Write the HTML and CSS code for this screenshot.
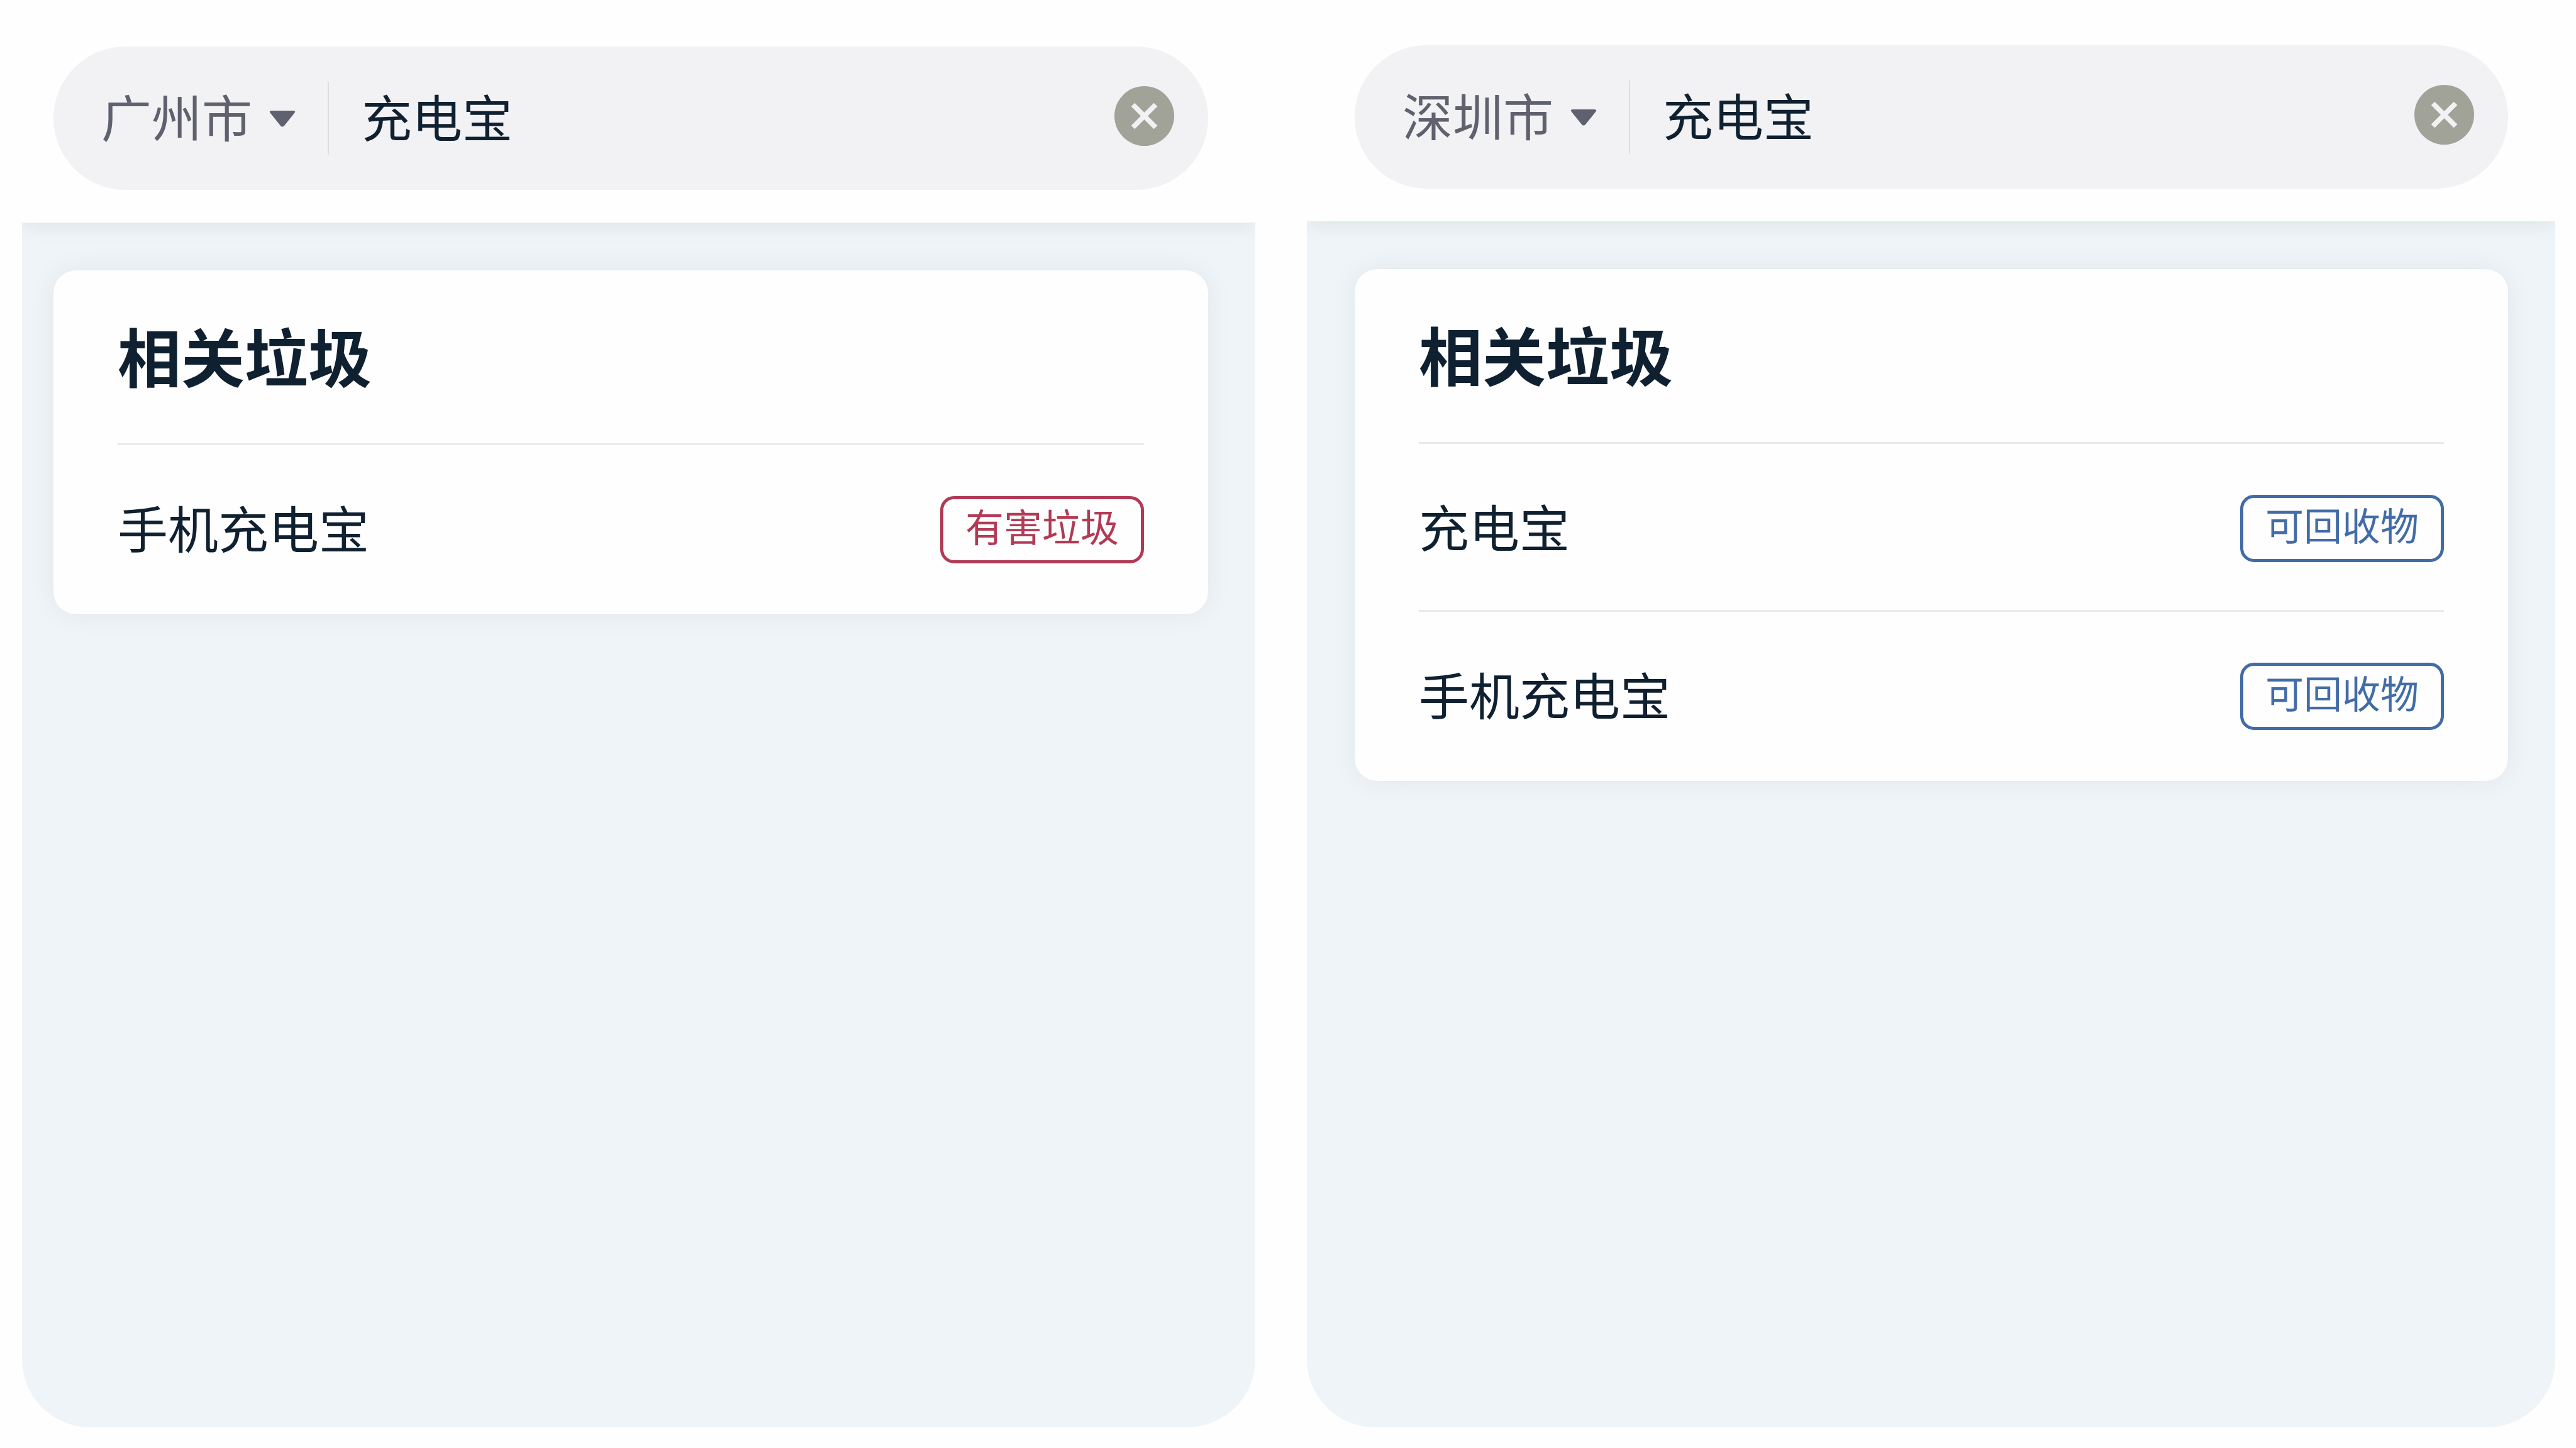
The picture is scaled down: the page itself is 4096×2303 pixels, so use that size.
FILE: index.html
```html
<!DOCTYPE html>
<html lang="zh-CN">
<head>
<meta charset="utf-8">
<meta name="viewport" content="width=device-width, initial-scale=1">
<title>垃圾分类查询</title>
<link rel="stylesheet" href="styles.css">
</head>
<body>
<main class="screens">
  <section class="screen screen--first" aria-label="广州市">
    <header class="topbar">
      <form class="search" role="search">
        <div class="city">
          <select class="city__select" aria-label="城市">
            <option selected>广州市</option>
            <option>深圳市</option>
          </select>
          <svg class="city__arrow" viewBox="0 0 42 28" aria-hidden="true"><path d="M4 1H38Q43 1 40 5L24 25Q21 28 18 25L2 5Q-1 1 4 1Z"/></svg>
        </div>
        <input class="search__input" type="text" value="充电宝" aria-label="搜索垃圾">
        <button class="clear" type="reset" aria-label="清除">
          <svg class="clear__icon" viewBox="0 0 95 95" aria-hidden="true"><circle cx="47.500" cy="47.500" r="47.500"/><path d="M29.500 29.500L65.500 65.500M65.500 29.500L29.500 65.500"/></svg>
        </button>
      </form>
    </header>
    <div class="content">
      <article class="card">
        <h2 class="card__title">相关垃圾</h2>
        <ul class="list">
          <li class="item"><span class="item__name">手机充电宝</span><span class="badge badge--harmful">有害垃圾</span></li>
        </ul>
      </article>
    </div>
  </section>

  <section class="screen screen--second" aria-label="深圳市">
    <header class="topbar">
      <form class="search" role="search">
        <div class="city">
          <select class="city__select" aria-label="城市">
            <option>广州市</option>
            <option selected>深圳市</option>
          </select>
          <svg class="city__arrow" viewBox="0 0 42 28" aria-hidden="true"><path d="M4 1H38Q43 1 40 5L24 25Q21 28 18 25L2 5Q-1 1 4 1Z"/></svg>
        </div>
        <input class="search__input" type="text" value="充电宝" aria-label="搜索垃圾">
        <button class="clear" type="reset" aria-label="清除">
          <svg class="clear__icon" viewBox="0 0 95 95" aria-hidden="true"><circle cx="47.500" cy="47.500" r="47.500"/><path d="M29.500 29.500L65.500 65.500M65.500 29.500L29.500 65.500"/></svg>
        </button>
      </form>
    </header>
    <div class="content">
      <article class="card">
        <h2 class="card__title">相关垃圾</h2>
        <ul class="list">
          <li class="item"><span class="item__name">充电宝</span><span class="badge badge--recyclable">可回收物</span></li>
          <li class="item"><span class="item__name">手机充电宝</span><span class="badge badge--recyclable">可回收物</span></li>
        </ul>
      </article>
    </div>
  </section>
</main>
</body>
</html>
```

FILE: styles.css
```css
* {
  box-sizing: border-box;
}

body {
  margin: 0;
  background: #fefefe;
  color: #0f2030;
  font-family: "Noto Sans CJK SC", sans-serif;
}

.screens {
  display: grid;
  grid-template-columns: 1961fr 1985fr;
  gap: 82px;
  min-height: 100vh;
  padding: 0 33px 33px 35px;
}

.screen {
  display: flex;
  flex-direction: column;
  overflow: hidden;
  border-radius: 0 0 108px 108px;
  background: #eef4f7;
}

.screen--first {
  --top: 74px;
  --left: 50px;
}

.screen--second {
  --top: 72px;
  --left: 76px;
}

.topbar {
  padding: var(--top) 75px 52px var(--left);
  background: #fefefe;
  box-shadow: 0 6px 30px rgba(20, 25, 10, 0.07);
}

.search {
  display: flex;
  align-items: center;
  height: 228px;
  padding: 0 54px 0 76px;
  border-radius: 114px;
  background: #f2f2f4;
}

.city {
  position: relative;
  display: flex;
  align-items: center;
  height: 117px;
  padding-right: 52px;
  border-right: 2px solid #dcdddf;
}

.city__select {
  width: 308px;
  height: 117px;
  padding: 0 0 10px;
  border: 0;
  appearance: none;
  background: none;
  color: #5f616e;
  font: 400 80px/107px "Noto Sans CJK SC", sans-serif;
}

.city__arrow {
  position: absolute;
  top: 45px;
  left: 267px;
  width: 42px;
  height: 28px;
  fill: #5f616e;
  pointer-events: none;
}

.search__input {
  flex: 1;
  min-width: 0;
  height: 117px;
  padding: 0 0 10px 52px;
  border: 0;
  outline: 0;
  background: none;
  color: #0f2030;
  font: 400 80px/107px "Noto Sans CJK SC", sans-serif;
}

.clear {
  width: 95px;
  height: 95px;
  margin: 0 0 8px;
  padding: 0;
  border: 0;
  background: none;
}

.clear__icon {
  display: block;
  width: 100%;
  height: 100%;
  fill: #a1a398;
  stroke: none;
}

.clear__icon path {
  stroke: #f2f2f4;
  stroke-width: 8;
}

.content {
  padding: 76px 75px 76px var(--left);
}

.card {
  padding: 0 102px 5px;
  border-radius: 36px;
  background: #fefefe;
  box-shadow: 0 0 44px rgba(20, 25, 10, 0.06);
}

.card__title {
  height: 275px;
  margin: 0;
  font-size: 101px;
  font-weight: 700;
  line-height: 269px;
}

.list {
  margin: 0;
  padding: 0;
  list-style: none;
}

.item {
  display: flex;
  align-items: center;
  justify-content: space-between;
  height: 267px;
  padding-top: 4px;
  border-top: 3px solid #e9e9e9;
}

.item__name {
  padding-bottom: 10px;
  font-size: 80px;
  line-height: 120px;
}

.badge {
  width: 324px;
  height: 107px;
  border: 5px solid currentColor;
  border-radius: 22px;
  font-size: 61px;
  line-height: 84px;
  text-align: center;
}

.badge--harmful {
  color: #b23a55;
}

.badge--recyclable {
  color: #426ca8;
}
```
